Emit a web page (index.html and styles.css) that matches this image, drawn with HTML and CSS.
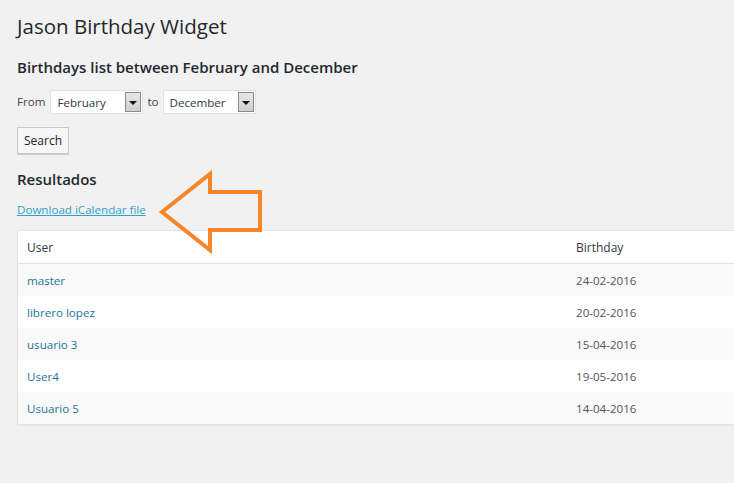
FILE: index.html
```html
<!DOCTYPE html>
<html>
<head>
<meta charset="utf-8">
<title>Jason Birthday Widget</title>
<link rel="stylesheet" href="styles.css">
</head>
<body>
<div class="wrap">
  <h1 class="title">Jason Birthday Widget</h1>
  <h2 class="section">Birthdays list between February and December</h2>
  <form class="filter">
    <span class="label">From</span>
    <span class="select"><span class="select-text">February</span><span class="select-btn"><span class="tri"></span></span></span>
    <span class="label to">to</span>
    <span class="select"><span class="select-text">December</span><span class="select-btn"><span class="tri"></span></span></span>
  </form>
  <button class="button" type="button">Search</button>
  <h2 class="section results">Resultados</h2>
  <a class="ical" href="#">Download iCalendar file</a>
  <table class="list">
    <thead>
      <tr><th class="col-user">User</th><th>Birthday</th></tr>
    </thead>
    <tbody>
      <tr><td><a href="#">master</a></td><td>24-02-2016</td></tr>
      <tr><td><a href="#">librero lopez</a></td><td>20-02-2016</td></tr>
      <tr><td><a href="#">usuario 3</a></td><td>15-04-2016</td></tr>
      <tr><td><a href="#">User4</a></td><td>19-05-2016</td></tr>
      <tr><td><a href="#">Usuario 5</a></td><td>14-04-2016</td></tr>
    </tbody>
  </table>
  <svg class="arrow" width="120" height="100" viewBox="150 165 120 100">
    <polygon points="162,212 210,174 210,192 260,192 260,230 210,230 210,250" fill="none" stroke="#f7862b" stroke-width="4" stroke-linejoin="miter" stroke-miterlimit="6"/>
  </svg>
</div>
</body>
</html>
```
FILE: styles.css
```css
html, body {
  margin: 0;
  padding: 0;
  background: #f1f1f1;
  overflow: hidden;
}
body {
  font-family: "Open Sans", "Liberation Sans", sans-serif;
  font-size: 11.6px;
  color: #444;
  width: 734px;
  height: 483px;
}
.wrap {
  position: relative;
  padding-left: 17px;
  display: flex;
  flex-direction: column;
  align-items: flex-start;
}
.title {
  font-size: 20.5px;
  font-weight: 400;
  line-height: 28px;
  color: #23282d;
  margin: 12px 0 0 0;
}
.section {
  font-size: 15px;
  font-weight: 600;
  line-height: 20px;
  color: #23282d;
  margin: 17px 0 0 0;
}
.filter {
  display: flex;
  align-items: center;
  margin-top: 13px;
  height: 24px;
}
.label {
  margin-right: 5px;
  color: #444;
  position: relative;
  top: -1px;
}
.label.to {
  margin-left: 4px;
  margin-right: 4px;
}
.select {
  display: flex;
  align-items: center;
  justify-content: space-between;
  width: 93px;
  height: 24px;
  box-sizing: border-box;
  background: #fff;
  border: 1px solid #e2e2e2;
  padding: 0 1px 0 6px;
  color: #32373c;
}
.select-btn {
  width: 16px;
  height: 20px;
  box-sizing: border-box;
  border: 1px solid #8a8a8a;
  background: linear-gradient(#e6e6e6, #cfcfcf);
  display: flex;
  align-items: center;
  justify-content: center;
}
.tri {
  width: 0;
  height: 0;
  border-left: 4px solid transparent;
  border-right: 4px solid transparent;
  border-top: 4px solid #111;
  margin-top: 1px;
}
.button {
  margin-top: 13px;
  height: 27px;
  padding: 0 6px;
  font-family: inherit;
  font-size: 12px;
  color: #222;
  background: #f7f7f7;
  border: 1px solid #c8c8c8;
  box-shadow: 0 1px 0 #ccc;
  border-radius: 0;
}
.results {
  margin-top: 15px;
}
.ical {
  margin-top: 12px;
  line-height: 18px;
  color: #2ea2cc;
  text-decoration: underline;
}
.list {
  margin-top: 11px;
  width: 717px;
  border-collapse: collapse;
  table-layout: fixed;
  background: #fff;
  border: 1px solid #e5e5e5;
  border-right: 0;
  box-shadow: 0 1px 1px rgba(0,0,0,.04);
}
.list th, .list td {
  text-align: left;
  padding: 0 9px;
  font-weight: 400;
}
.list th {
  height: 32px;
  color: #32373c;
  font-size: 12px;
  border-bottom: 1px solid #e1e1e1;
}
.list th.col-user {
  width: 531px;
}
.list td {
  height: 32px;
  color: #555;
}
.list tbody tr:nth-child(odd) {
  background: #f9f9f9;
}
.list a {
  color: #21759b;
  text-decoration: none;
}
.arrow {
  position: absolute;
  left: 150px;
  top: 165px;
}
```
